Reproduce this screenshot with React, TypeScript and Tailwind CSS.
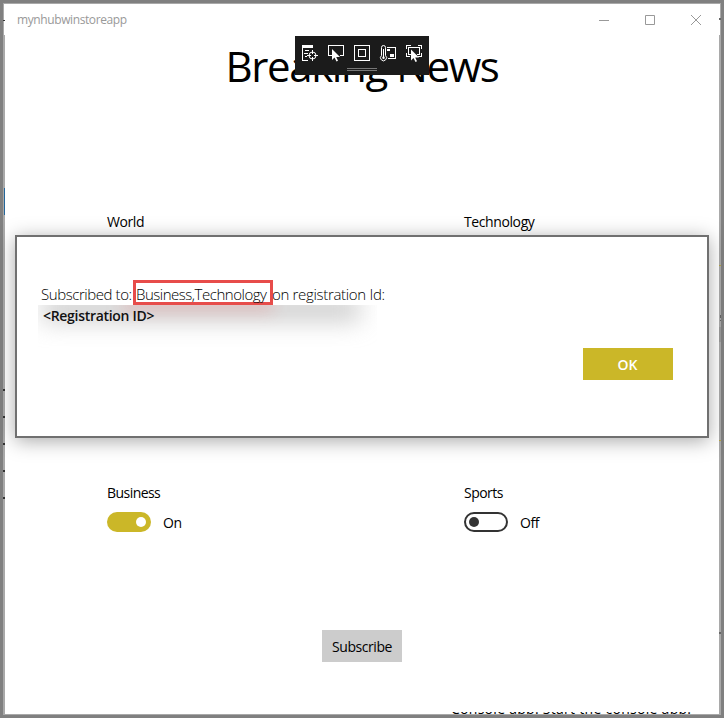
import React from "react";

function Toggle({ label, on, className }: { label: string; on: boolean; className: string }) {
  return (
    <div className={className}>
      <div className="h-5 leading-5 tracking-[-0.55px]">{label}</div>
      <div className="mt-[9px] flex h-5 items-center">
        <span
          className={
            on
              ? "flex h-5 w-11 items-center justify-end rounded-full bg-[#cbb728] pr-[5px]"
              : "flex h-5 w-11 items-center rounded-full border-2 border-[#333] pl-[3px]"
          }
        >
          <span className={on ? "size-2.5 rounded-full bg-white" : "size-2.5 rounded-full bg-[#333]"} />
        </span>
        <span className="ml-3 mt-[2px] leading-5 tracking-[-0.4px]">{on ? "On" : "Off"}</span>
      </div>
    </div>
  );
}

function DebugToolbar() {
  return (
    <svg className="absolute left-[290px] top-[32px] h-[39px] w-[134px] bg-[#1b1b1b]" viewBox="295 36 134 39" fill="none" stroke="#fff" shapeRendering="crispEdges">
      <path d="M302 46.5h11M302 45.5h11M302 47.5h11" />
      <path d="M302.500 47v13.500h5M305 50.500h4M304 53.500h4M305 56.500h2" />
      <g shapeRendering="auto">
        <circle cx="312.500" cy="55.500" r="3.500" />
        <path d="M312.500 50v4M312.500 57v4M307 55.500h4M314 55.500h4" />
      </g>
      <path d="M333 55.500h-4.500v-10h15v10h-4" />
      <path d="M332 49v11l2.500-2.500 2 4 1.500-.8-1.800-3.700h3.800z" fill="#fff" stroke="none" shapeRendering="auto" />
      <path d="M354.500 45.500h15v15h-15zM358.500 49.500h7v7h-7z" />
      <g shapeRendering="auto">
        <path d="M381.500 55.500v-8a2 2 0 0 1 4 0v8a3 3 0 1 1-4 0zM383.500 49v8" />
        <circle cx="383.500" cy="57.800" r="1.200" fill="#fff" stroke="none" />
      </g>
      <path d="M387 47.500h8.500v11H388" />
      <path d="M387 49h3v2h-3zM390 54h4v3h-4z" fill="#fff" stroke="none" />
      <path d="M406.500 49v-3.500h4M418 45.500h3.500V49M406.500 53v3.500h3M421.500 53v3.500H418" />
      <path d="M411 54.500h-2.500v-7h11v7H417" />
      <path d="M411 49.500v11l2.500-2.500 2 4 1.500-.8-1.800-3.700h3.800z" fill="#fff" stroke="none" shapeRendering="auto" />
      <path d="M347 68.500h30M347 70.500h30" stroke="#777" />
    </svg>
  );
}

function Dialog() {
  return (
    <section className="absolute left-[10px] top-[231px] h-[203px] w-[694px] border-2 border-[#707070] bg-white pl-[21px] pr-[34px] pt-[43px] shadow-[0_3px_18px_rgba(0,0,0,0.34)]">
      <div className="flex h-[25px] items-center whitespace-nowrap text-[15px] font-light">
        <span className="w-[95px] shrink-0 pl-[3px] pt-[3px] tracking-[-0.43px]">Subscribed to:</span>
        <span className="z-10 flex h-[25px] w-[140px] shrink-0 items-center border-3 border-[#e74c4a] pt-[3px] tracking-[-0.48px]">Business,Technology</span>
        <span className="-ml-px pt-[3px] tracking-[-0.32px]">on registration Id:</span>
      </div>
      <div className="relative h-[43px] w-[339px] overflow-hidden pl-[5px]">
        <div className="absolute -top-2 left-1 h-[24px] w-[318px] bg-[#aaa]/60 blur-[12px]" />
        <div className="absolute -top-2 left-[85px] h-[15px] w-[150px] bg-[#e74c4a]/20 blur-[8px]" />
        <strong className="relative font-semibold leading-[22px] tracking-[-0.3px] text-[#111]">&lt;Registration ID&gt;</strong>
      </div>
      <button className="ml-auto block h-8 w-[90px] bg-[#cbb728] pr-px font-semibold text-white">OK</button>
    </section>
  );
}

/* Slivers of the desktop showing through the window's side borders. */
function EdgeMarks() {
  return (
    <>
      <svg className="absolute -left-[2px] top-0 h-[709px] w-[2px]" viewBox="3 4 2 709" shapeRendering="crispEdges">
        <path d="M4 4h1v31h-1z" fill="#fff" />
        <path d="M3 20h2v1h-2zM3 389h2v2h-2zM3 416h2v2h-2zM3 443h2v2h-2zM3 470h2v2h-2zM3 497h2v2h-2z" fill="#333" />
        <path d="M4 188h1v27h-1z" fill="#24669a" />
      </svg>
      <svg className="absolute -right-[2px] top-0 h-[709px] w-[2px]" viewBox="719 4 2 709" shapeRendering="crispEdges">
        <path d="M719 4h1v31h-1z" fill="#fff" />
        <path d="M719 18h2v2h-2zM719 632h2v2h-2zM720 315h1v3h-1zM720 320h1v1h-1z" fill="#666" />
        <path d="M719 327h2v15h-2z" fill="#999" />
        <path d="M719 265h2v1h-2zM719 440h2v1h-2z" fill="#b5a544" />
      </svg>
    </>
  );
}

export default function App() {
  return (
    <div className="flex h-[718px] w-[724px] flex-col border-[3px] border-[#808080] font-['Open_Sans','Noto_Sans',sans-serif] text-[14px] text-black">
      <main className="relative flex h-[712px] flex-col border-x-2 border-y border-[#a9a9a9] bg-white">
        <header className="flex h-8 items-center pl-3 text-[12px] text-[#999]">
          <span className="grow tracking-[-0.4px]">mynhubwinstoreapp</span>
          <svg className="h-8 w-[130px]" viewBox="589 4 130 32" fill="none" stroke="#999">
            <path d="M599 20.500h10M645.500 15.500h9v9h-9zM691 15l10 10M701 15l-10 10" />
          </svg>
        </header>
        <h1 className="h-[60px] text-center text-[42px] leading-[60px] tracking-[-1.4px]">Breaking News</h1>
        <div className="mt-[116px] flex h-5 leading-5 tracking-[-0.4px]">
          <span className="w-[357px] pl-[102px]">World</span>
          <span className="pl-[102px]">Technology</span>
        </div>
        <div className="mt-[251px] flex">
          <Toggle label="Business" on className="w-[357px] pl-[102px]" />
          <Toggle label="Sports" on={false} className="pl-[102px]" />
        </div>
        <button className="mx-auto mt-[98px] h-8 w-20 bg-[#ccc] tracking-[-0.45px]">Subscribe</button>
        <div className="ml-auto mr-[28px] mt-auto flex h-[2px] w-[240px] items-end overflow-hidden whitespace-nowrap">
          <span className="-mb-[5px] text-[14px] leading-5 tracking-[0.28px]">Console app: Start the console app.</span>
        </div>
        <EdgeMarks />
        <DebugToolbar />
        <Dialog />
      </main>
    </div>
  );
}
